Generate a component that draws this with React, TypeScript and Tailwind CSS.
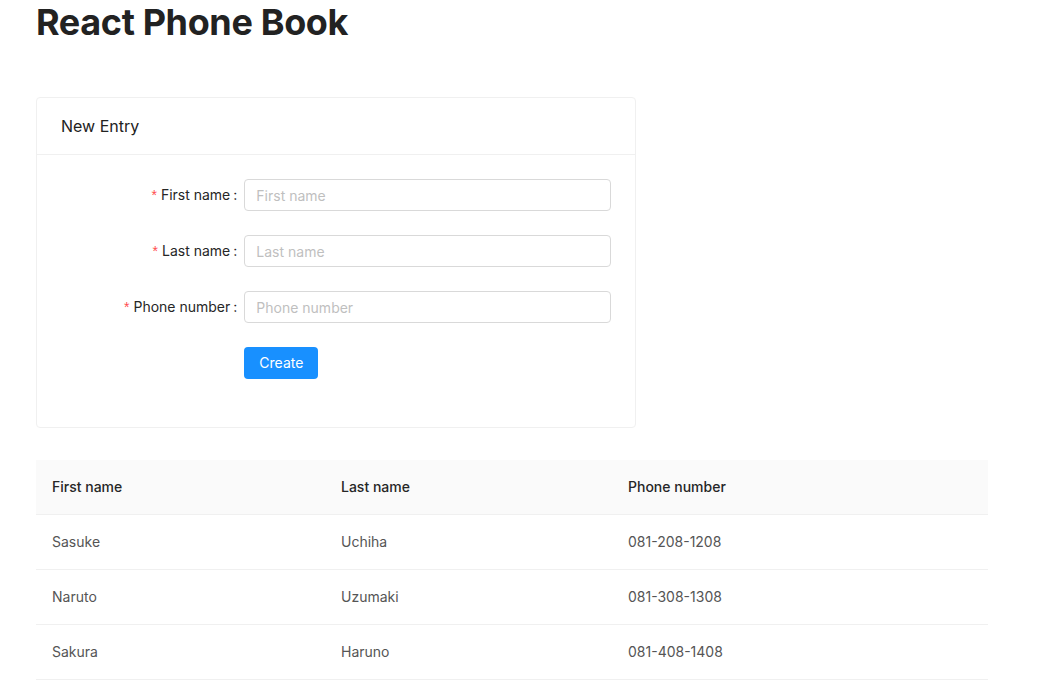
import React, { useState } from 'react';

interface Entry {
  firstName: string;
  lastName: string;
  phone: string;
}

const initialEntries: Entry[] = [
  { firstName: 'Sasuke', lastName: 'Uchiha', phone: '081-208-1208' },
  { firstName: 'Naruto', lastName: 'Uzumaki', phone: '081-308-1308' },
  { firstName: 'Sakura', lastName: 'Haruno', phone: '081-408-1408' },
];

const fields = [
  { key: 'firstName', label: 'First name' },
  { key: 'lastName', label: 'Last name' },
  { key: 'phone', label: 'Phone number' },
] as const;

export default function App() {
  const [entries, setEntries] = useState<Entry[]>(initialEntries);
  const [form, setForm] = useState<Entry>({ firstName: '', lastName: '', phone: '' });

  const handleSubmit = (e: React.FormEvent) => {
    e.preventDefault();
    if (!form.firstName || !form.lastName || !form.phone) return;
    setEntries(prev => [...prev, form]);
    setForm({ firstName: '', lastName: '', phone: '' });
  };

  return (
    <div className="min-h-screen bg-white px-9 font-['Inter',sans-serif] text-sm text-[#262626]">
      <h1 className="m-0 text-[36px] font-bold leading-[1.25] tracking-[-0.01em] text-[#222]">React Phone Book</h1>

      <div className="mt-[52px] w-[600px] rounded-sm border border-[#f0f0f0] bg-white">
        <div className="border-b border-[#f0f0f0] px-6 py-4 text-base leading-6 font-normal text-[#222]">New Entry</div>
        <form onSubmit={handleSubmit} className="px-6 pt-6 pb-6">
          {fields.map(f => (
            <div key={f.key} className="mb-6 flex items-center">
              <label className="flex w-1/3 items-center justify-end pr-[5px] leading-8 text-[#262626]">
                <span className="mr-1 font-['Liberation_Sans',sans-serif] text-[14px] text-[#ff4d4f]">*</span>
                {f.label}
                <span className="ml-[3px] mr-0.5">:</span>
              </label>
              <div className="w-2/3">
                <input
                  value={form[f.key]}
                  onChange={e => setForm(prev => ({ ...prev, [f.key]: e.target.value }))}
                  placeholder={f.label}
                  className="h-8 w-full rounded-sm border border-[#d9d9d9] px-[11px] text-sm text-[#262626] outline-none placeholder:text-[#bfbfbf] focus:border-[#40a9ff]"
                />
              </div>
            </div>
          ))}
          <div className="mb-6 flex">
            <div className="w-1/3" />
            <button
              type="submit"
              className="h-8 rounded-sm bg-[#1890ff] px-[15px] text-sm text-white"
            >
              Create
            </button>
          </div>
        </form>
      </div>

      <table className="mt-8 w-[952px] border-collapse text-left">
        <thead>
          <tr className="bg-[#fafafa]">
            <th className="w-[289px] border-b border-[#f0f0f0] px-4 py-4 leading-[22px] font-medium text-[#262626]">First name</th>
            <th className="w-[287px] border-b border-[#f0f0f0] px-4 py-4 leading-[22px] font-medium text-[#262626]">Last name</th>
            <th className="border-b border-[#f0f0f0] px-4 py-4 leading-[22px] font-medium text-[#262626]">Phone number</th>
          </tr>
        </thead>
        <tbody>
          {entries.map((row, i) => (
            <tr key={i}>
              <td className="border-b border-[#f0f0f0] px-4 py-4 leading-[22px] text-[#555]">{row.firstName}</td>
              <td className="border-b border-[#f0f0f0] px-4 py-4 leading-[22px] text-[#555]">{row.lastName}</td>
              <td className="border-b border-[#f0f0f0] px-4 py-4 leading-[22px] text-[#555]">{row.phone}</td>
            </tr>
          ))}
        </tbody>
      </table>
    </div>
  );
}
